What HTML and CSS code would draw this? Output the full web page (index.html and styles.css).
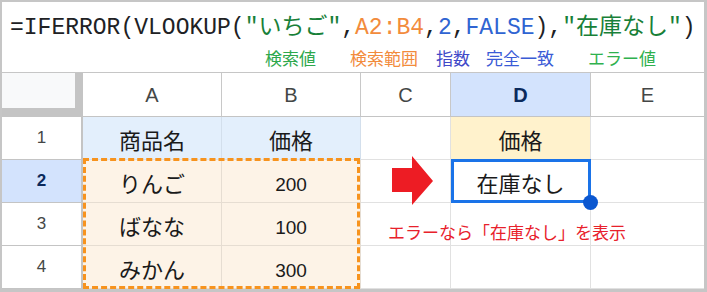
FILE: index.html
```html
<!DOCTYPE html>
<html lang="ja">
<head>
<meta charset="utf-8">
<link rel="stylesheet" href="styles.css">
</head>
<body>
<div class="frame">
  <div class="formula">
    <div class="f-line">=IFERROR(VLOOKUP(<span class="str">"いちご"</span>,<span class="rng">A2:B4</span>,<span class="num">2</span>,<span class="num">FALSE</span>),<span class="str">"在庫なし"</span>)</div>
    <div class="labels">
      <span class="lb lb-key">検索値</span>
      <span class="lb lb-range">検索範囲</span>
      <span class="lb lb-idx">指数</span>
      <span class="lb lb-exact">完全一致</span>
      <span class="lb lb-err">エラー値</span>
    </div>
  </div>
  <div class="sheet">
    <div class="row">
      <div class="cell corner"></div>
      <div class="cell hd">A</div>
      <div class="cell hd">B</div>
      <div class="cell hd">C</div>
      <div class="cell hd hd-sel">D</div>
      <div class="cell hd hd-last">E</div>
    </div>
    <div class="row">
      <div class="cell rh">1</div>
      <div class="cell dc blue">商品名</div>
      <div class="cell dc blue">価格</div>
      <div class="cell dc"></div>
      <div class="cell dc yellow">価格</div>
      <div class="cell dc last"></div>
    </div>
    <div class="row">
      <div class="cell rh rh-sel">2</div>
      <div class="cell dc peach">りんご</div>
      <div class="cell dc peach num-t">200</div>
      <div class="cell dc"></div>
      <div class="cell dc">在庫なし</div>
      <div class="cell dc last"></div>
    </div>
    <div class="row">
      <div class="cell rh">3</div>
      <div class="cell dc peach">ばなな</div>
      <div class="cell dc peach num-t">100</div>
      <div class="cell dc"></div>
      <div class="cell dc"></div>
      <div class="cell dc last"></div>
    </div>
    <div class="row">
      <div class="cell rh">4</div>
      <div class="cell dc peach">みかん</div>
      <div class="cell dc peach num-t">300</div>
      <div class="cell dc"></div>
      <div class="cell dc"></div>
      <div class="cell dc last"></div>
    </div>
    <div class="dash"></div>
    <svg class="arrow" width="90" height="43" viewBox="0 0 90 43">
      <polygon points="31,8 51,8 51,-4 72,21 51,45 51,32 31,32" fill="#ed1c24"/>
    </svg>
    <div class="selection"><span class="handle"></span></div>
    <div class="note">エラーなら「在庫なし」を表示</div>
  </div>
</div>
</body>
</html>
```
FILE: styles.css
```css
body {
  margin: 0;
}

.frame {
  width: 707px;
  height: 292px;
  box-sizing: border-box;
  border: 2px solid #c6c6c6;
  border-right-width: 3px;
  border-bottom-width: 3px;
  background: #ffffff;
  font-family: "Liberation Sans", "Noto Sans CJK JP", sans-serif;
  color: #1f1f1f;
}

.formula {
  height: 70px;
  border-bottom: 1px solid #c6c6c6;
  padding-left: 8px;
}

.f-line {
  font-family: "Liberation Mono", "Noto Sans CJK JP", monospace;
  font-size: 23px;
  line-height: 28px;
  padding-top: 12px;
  color: #202124;
  white-space: nowrap;
}

.str { color: #188038; }
.rng { color: #f28b3c; }
.num { color: #2f64d2; }

.labels {
  display: flex;
  margin-top: 6px;
  font-family: "Noto Sans CJK JP", sans-serif;
  font-size: 17px;
  line-height: 20px;
}

.lb-key { margin-left: 255px; color: #2ea84c; }
.lb-range { margin-left: 34px; color: #f28b3c; }
.lb-idx { margin-left: 18px; color: #3f49c8; }
.lb-exact { margin-left: 16px; color: #3a5bd6; }
.lb-err { margin-left: 34px; color: #2fb14e; }

.sheet {
  display: grid;
  grid-template-columns: 81px 139px 139px 90px 140px 1fr;
  grid-template-rows: 44px repeat(4, 43px);
}

.row { display: contents; }

.row:nth-child(1) > .cell { grid-row: 1; }
.row:nth-child(2) > .cell { grid-row: 2; }
.row:nth-child(3) > .cell { grid-row: 3; }
.row:nth-child(4) > .cell { grid-row: 4; }
.row:nth-child(5) > .cell { grid-row: 5; }

.cell:nth-child(1) { grid-column: 1; }
.cell:nth-child(2) { grid-column: 2; }
.cell:nth-child(3) { grid-column: 3; }
.cell:nth-child(4) { grid-column: 4; }
.cell:nth-child(5) { grid-column: 5; }
.cell:nth-child(6) { grid-column: 6; }

.cell {
  box-sizing: border-box;
  border-right: 1px solid #e1e1e1;
  border-bottom: 1px solid #e1e1e1;
  display: flex;
  align-items: center;
  justify-content: center;
  line-height: 1.2;
}

.corner {
  background: #f8f9fa;
  border-right: 8px solid #c4c4c4;
  border-bottom: 9px solid #c4c4c4;
}

.hd {
  border-right-color: #c8c8c8;
  border-bottom-color: #c4c4c4;
  font-size: 20px;
  color: #444746;
}

.hd-last { border-right: none; }

.hd-sel {
  background: #d3e3fd;
  color: #0b2a5c;
  font-weight: bold;
}

.rh {
  border-right: 2px solid #c4c4c4;
  border-bottom-color: #c4c4c4;
  font-size: 17px;
  color: #444746;
}

.rh-sel {
  background: #d3e3fd;
  color: #0b2a5c;
  font-weight: bold;
}

.dc {
  font-size: 22px;
  padding-top: 9px;
  color: #1a1a1a;
}

.dc.last { border-right: none; }

.num-t { font-size: 19px; }

.blue {
  background: #e3effc;
  border-right-color: #d3dfec;
  border-bottom-color: #dde3e8;
}

.yellow {
  background: #fff2cc;
  border-bottom-color: #e6e0cf;
}

.peach {
  background: #fdf3e7;
  border-right-color: #e6ddd2;
  border-bottom-color: #e6ddd2;
}

.dash {
  grid-column: 2 / 4;
  grid-row: 3 / 6;
  margin: -2px 1px 0 0;
  border: 3px dashed #f7931e;
}

.arrow {
  grid-column: 4;
  grid-row: 3;
  overflow: visible;
}

.selection {
  grid-column: 5;
  grid-row: 3;
  margin-top: -1px;
  border: 3px solid #1a73e8;
  position: relative;
}

.handle {
  position: absolute;
  right: -10px;
  bottom: -10px;
  width: 15px;
  height: 15px;
  border-radius: 50%;
  background: #0b57d0;
}

.note {
  grid-column: 4 / 7;
  grid-row: 4;
  padding: 20px 0 0 27px;
  font-family: "Noto Sans CJK JP", sans-serif;
  font-size: 17px;
  line-height: 18px;
  color: #e8212b;
  white-space: nowrap;
}
```
